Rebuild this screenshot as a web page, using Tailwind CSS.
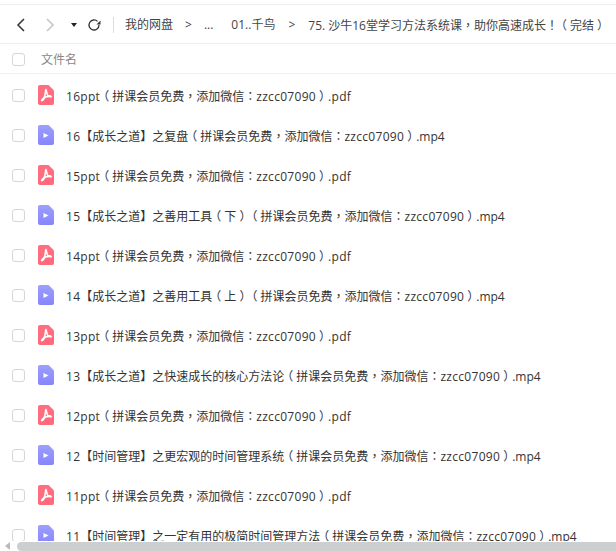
<!DOCTYPE html>
<html><head><meta charset="utf-8"><script src="https://cdn.jsdelivr.net/npm/@tailwindcss/browser@4"></script></head>
<body class="bg-white">
<svg width="0" height="0" class="absolute"><defs>
<linearGradient id="mg" x1="0" y1="0" x2="0" y2="1"><stop offset="0" stop-color="#9d9fff"/><stop offset="1" stop-color="#8585fc"/></linearGradient>
<linearGradient id="pg" x1="0" y1="0" x2="0" y2="1"><stop offset="0" stop-color="#ff6f7f"/><stop offset="1" stop-color="#ff6a7c"/></linearGradient>
<symbol id="pdf" viewBox="0 0 16 20"><path d="M2 0H10.500L16 5.500V18a2 2 0 0 1-2 2H2a2 2 0 0 1-2-2V2a2 2 0 0 1 2-2Z" fill="url(#pg)"/><path d="M8 4.500C7 5 8 9 6.500 11.500 5.500 13.500 3.500 15 3.500 15.500 4 16.500 6 14 7 12.300 9 11.500 11.500 11.300 13 11.800 13.500 11 12 10.500 9.800 10.600 8.500 9 8.700 5 8 4.500Z" fill="none" stroke="#fff" stroke-width="1.500"/></symbol>
<symbol id="mp4" viewBox="0 0 16 20"><path d="M2 0H10.500L16 5.500V18a2 2 0 0 1-2 2H2a2 2 0 0 1-2-2V2a2 2 0 0 1 2-2Z" fill="url(#mg)"/><path d="M5.500 8 10.500 10.500 5.500 13Z" fill="#fff"/></symbol>
</defs></svg>
<div class="relative h-[551px] w-[616px] overflow-hidden font-['Open_Sans','Noto_Sans_CJK_SC',sans-serif] text-[12px] text-[#333] [text-spacing-trim:space-all]">
  <div class="mt-1 flex h-[40px] items-center whitespace-nowrap border-y border-[#eeeeee] pt-[2px] text-[#444]">
    <svg class="ml-[16px]" width="9" height="14" viewBox="0 0 9 14"><path d="M8 1 2 7l6 6" fill="none" stroke="#333" stroke-width="1.500"/></svg>
    <svg class="ml-[21px]" width="9" height="14" viewBox="0 0 9 14"><path d="M1 1l6 6-6 6" fill="none" stroke="#c4c4c4" stroke-width="1.500"/></svg>
    <svg class="ml-[16px]" width="6" height="4" viewBox="0 0 6 4"><path d="M0 0H6L3 4Z" fill="#222"/></svg>
    <svg class="ml-[10px]" width="14" height="14" viewBox="0 0 14 14"><path d="M12 7a5 5 0 1 1-1.500-3.600" fill="none" stroke="#333" stroke-width="1.300"/><path d="M13.500 2.500V6.500H9.500Z" fill="#333"/></svg>
    <div class="ml-[12px] h-[16px] w-px bg-[#dddddd]"></div>
    <span class="ml-[11px]">我的网盘</span>
    <span class="ml-[12px]">&gt;</span>
    <span class="ml-[12px]">...</span>
    <span class="ml-[18px]">01..千鸟</span>
    <span class="ml-[13px]">&gt;</span>
    <span class="ml-[13px]">75. 沙牛16堂学习方法系统课<span class="font-['Noto_Sans_CJK_TC']">，</span>助你高速成长<span class="font-['Noto_Sans_CJK_TC']">！</span><span class="relative -left-[3px]">（</span>完结<span class="relative left-[3px]">）</span></span>
  </div>
  <div class="flex h-[30px] items-center border-b border-[#f0f0f0] pt-[2px] text-[#888]">
    <div class="ml-[12px] size-[13px] rounded-[3px] border border-[#d6d6d6]"></div>
    <span class="ml-[16px]">文件名</span>
  </div>
  <div class="flex flex-col whitespace-nowrap pt-px">
    <div class="flex h-[40px] items-center"><div class="ml-[12px] size-[13px] rounded-[3px] border border-[#d6d6d6]"></div><svg class="ml-[13px]" width="16" height="20"><use href="#pdf"/></svg><span class="ml-[12px] pt-[2px]"><span class="tracking-[0.3px]">16ppt</span><span class="relative -left-[3px]">（</span>拼课会员免费<span class="font-['Noto_Sans_CJK_TC']">，</span>添加微信<span class="font-['Noto_Sans_CJK_TC']">：</span><span class="tracking-[0.3px]">zzcc07090</span><span class="relative left-[3px]">）</span><span class="tracking-[0.3px]">.pdf</span></span></div>
    <div class="flex h-[40px] items-center"><div class="ml-[12px] size-[13px] rounded-[3px] border border-[#d6d6d6]"></div><svg class="ml-[13px]" width="16" height="20"><use href="#mp4"/></svg><span class="ml-[12px] pt-[2px]"><span class="tracking-[0.3px]">16</span>【成长之道】之复盘<span class="relative -left-[3px]">（</span>拼课会员免费<span class="font-['Noto_Sans_CJK_TC']">，</span>添加微信<span class="font-['Noto_Sans_CJK_TC']">：</span><span class="tracking-[0.3px]">zzcc07090</span><span class="relative left-[3px]">）</span>.mp4</span></div>
    <div class="flex h-[40px] items-center"><div class="ml-[12px] size-[13px] rounded-[3px] border border-[#d6d6d6]"></div><svg class="ml-[13px]" width="16" height="20"><use href="#pdf"/></svg><span class="ml-[12px] pt-[2px]"><span class="tracking-[0.3px]">15ppt</span><span class="relative -left-[3px]">（</span>拼课会员免费<span class="font-['Noto_Sans_CJK_TC']">，</span>添加微信<span class="font-['Noto_Sans_CJK_TC']">：</span><span class="tracking-[0.3px]">zzcc07090</span><span class="relative left-[3px]">）</span><span class="tracking-[0.3px]">.pdf</span></span></div>
    <div class="flex h-[40px] items-center"><div class="ml-[12px] size-[13px] rounded-[3px] border border-[#d6d6d6]"></div><svg class="ml-[13px]" width="16" height="20"><use href="#mp4"/></svg><span class="ml-[12px] pt-[2px]"><span class="tracking-[0.3px]">15</span>【成长之道】之善用工具<span class="relative -left-[3px]">（</span>下<span class="relative left-[3px]">）</span><span class="relative -left-[3px]">（</span>拼课会员免费<span class="font-['Noto_Sans_CJK_TC']">，</span>添加微信<span class="font-['Noto_Sans_CJK_TC']">：</span><span class="tracking-[0.3px]">zzcc07090</span><span class="relative left-[3px]">）</span>.mp4</span></div>
    <div class="flex h-[40px] items-center"><div class="ml-[12px] size-[13px] rounded-[3px] border border-[#d6d6d6]"></div><svg class="ml-[13px]" width="16" height="20"><use href="#pdf"/></svg><span class="ml-[12px] pt-[2px]"><span class="tracking-[0.3px]">14ppt</span><span class="relative -left-[3px]">（</span>拼课会员免费<span class="font-['Noto_Sans_CJK_TC']">，</span>添加微信<span class="font-['Noto_Sans_CJK_TC']">：</span><span class="tracking-[0.3px]">zzcc07090</span><span class="relative left-[3px]">）</span><span class="tracking-[0.3px]">.pdf</span></span></div>
    <div class="flex h-[40px] items-center"><div class="ml-[12px] size-[13px] rounded-[3px] border border-[#d6d6d6]"></div><svg class="ml-[13px]" width="16" height="20"><use href="#mp4"/></svg><span class="ml-[12px] pt-[2px]"><span class="tracking-[0.3px]">14</span>【成长之道】之善用工具<span class="relative -left-[3px]">（</span>上<span class="relative left-[3px]">）</span><span class="relative -left-[3px]">（</span>拼课会员免费<span class="font-['Noto_Sans_CJK_TC']">，</span>添加微信<span class="font-['Noto_Sans_CJK_TC']">：</span><span class="tracking-[0.3px]">zzcc07090</span><span class="relative left-[3px]">）</span>.mp4</span></div>
    <div class="flex h-[40px] items-center"><div class="ml-[12px] size-[13px] rounded-[3px] border border-[#d6d6d6]"></div><svg class="ml-[13px]" width="16" height="20"><use href="#pdf"/></svg><span class="ml-[12px] pt-[2px]"><span class="tracking-[0.3px]">13ppt</span><span class="relative -left-[3px]">（</span>拼课会员免费<span class="font-['Noto_Sans_CJK_TC']">，</span>添加微信<span class="font-['Noto_Sans_CJK_TC']">：</span><span class="tracking-[0.3px]">zzcc07090</span><span class="relative left-[3px]">）</span><span class="tracking-[0.3px]">.pdf</span></span></div>
    <div class="flex h-[40px] items-center"><div class="ml-[12px] size-[13px] rounded-[3px] border border-[#d6d6d6]"></div><svg class="ml-[13px]" width="16" height="20"><use href="#mp4"/></svg><span class="ml-[12px] pt-[2px]"><span class="tracking-[0.3px]">13</span>【成长之道】之快速成长的核心方法论<span class="relative -left-[3px]">（</span>拼课会员免费<span class="font-['Noto_Sans_CJK_TC']">，</span>添加微信<span class="font-['Noto_Sans_CJK_TC']">：</span><span class="tracking-[0.3px]">zzcc07090</span><span class="relative left-[3px]">）</span>.mp4</span></div>
    <div class="flex h-[40px] items-center"><div class="ml-[12px] size-[13px] rounded-[3px] border border-[#d6d6d6]"></div><svg class="ml-[13px]" width="16" height="20"><use href="#pdf"/></svg><span class="ml-[12px] pt-[2px]"><span class="tracking-[0.3px]">12ppt</span><span class="relative -left-[3px]">（</span>拼课会员免费<span class="font-['Noto_Sans_CJK_TC']">，</span>添加微信<span class="font-['Noto_Sans_CJK_TC']">：</span><span class="tracking-[0.3px]">zzcc07090</span><span class="relative left-[3px]">）</span><span class="tracking-[0.3px]">.pdf</span></span></div>
    <div class="flex h-[40px] items-center"><div class="ml-[12px] size-[13px] rounded-[3px] border border-[#d6d6d6]"></div><svg class="ml-[13px]" width="16" height="20"><use href="#mp4"/></svg><span class="ml-[12px] pt-[2px]"><span class="tracking-[0.3px]">12</span>【时间管理】之更宏观的时间管理系统<span class="relative -left-[3px]">（</span>拼课会员免费<span class="font-['Noto_Sans_CJK_TC']">，</span>添加微信<span class="font-['Noto_Sans_CJK_TC']">：</span><span class="tracking-[0.3px]">zzcc07090</span><span class="relative left-[3px]">）</span>.mp4</span></div>
    <div class="flex h-[40px] items-center"><div class="ml-[12px] size-[13px] rounded-[3px] border border-[#d6d6d6]"></div><svg class="ml-[13px]" width="16" height="20"><use href="#pdf"/></svg><span class="ml-[12px] pt-[2px]"><span class="tracking-[0.3px]">11ppt</span><span class="relative -left-[3px]">（</span>拼课会员免费<span class="font-['Noto_Sans_CJK_TC']">，</span>添加微信<span class="font-['Noto_Sans_CJK_TC']">：</span><span class="tracking-[0.3px]">zzcc07090</span><span class="relative left-[3px]">）</span><span class="tracking-[0.3px]">.pdf</span></span></div>
    <div class="flex h-[40px] items-center"><div class="ml-[12px] size-[13px] rounded-[3px] border border-[#d6d6d6]"></div><svg class="ml-[13px]" width="16" height="20"><use href="#mp4"/></svg><span class="ml-[12px] pt-[2px]"><span class="tracking-[0.3px]">11</span>【时间管理】之一定有用的极简时间管理方法<span class="relative -left-[3px]">（</span>拼课会员免费<span class="font-['Noto_Sans_CJK_TC']">，</span>添加微信<span class="font-['Noto_Sans_CJK_TC']">：</span><span class="tracking-[0.3px]">zzcc07090</span><span class="relative left-[3px]">）</span>.mp4</span></div>
  </div>
  <div class="absolute inset-x-0 bottom-0 flex h-[10px] items-center bg-white">
    <svg class="ml-[5px]" width="5" height="8" viewBox="0 0 5 8"><path d="M5 0V8L0 4Z" fill="#bbbbbb"/></svg>
    <div class="ml-[7px] h-[9px] flex-1 rounded-l-[5px] bg-[#cdcecf]"></div>
  </div>
</div>
</body></html>
